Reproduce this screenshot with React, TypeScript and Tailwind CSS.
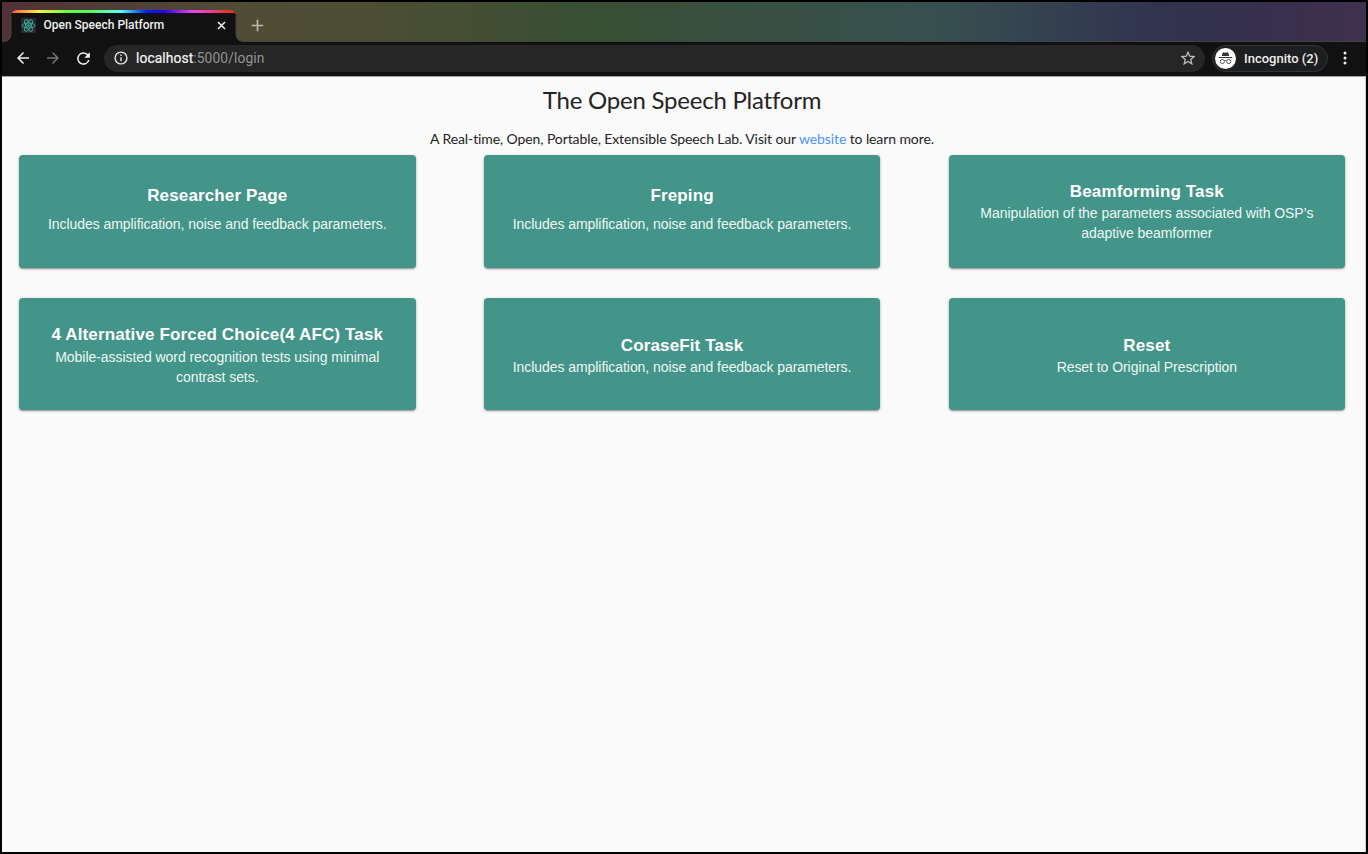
import React from "react";

type Task = { title: string; lines: string[]; pad: string; gap: string };

const tasks: Task[] = [
  { title: "Researcher Page", lines: ["Includes amplification, noise and feedback parameters."], pad: "pt-[31px]", gap: "mt-[8px]" },
  { title: "Freping", lines: ["Includes amplification, noise and feedback parameters."], pad: "pt-[31px]", gap: "mt-[8px]" },
  { title: "Beamforming Task", lines: ["Manipulation of the parameters associated with OSP’s", "adaptive beamformer"], pad: "pt-[27px]", gap: "mt-[1px]" },
  { title: "4 Alternative Forced Choice(4 AFC) Task", lines: ["Mobile-assisted word recognition tests using minimal", "contrast sets."], pad: "pt-[27px]", gap: "mt-[2px]" },
  { title: "CoraseFit Task", lines: ["Includes amplification, noise and feedback parameters."], pad: "pt-[38px]", gap: "mt-[1px]" },
  { title: "Reset", lines: ["Reset to Original Prescription"], pad: "pt-[38px]", gap: "mt-[1px]" },
];

function ReactIcon() {
  return (
    <svg width="15" height="15" viewBox="0 0 15 15" fill="none" stroke="#3fae98" strokeWidth="0.9">
      <rect width="15" height="15" fill="#242b35" stroke="none" />
      <ellipse cx="7.5" cy="7.5" rx="6.4" ry="2.5" />
      <ellipse cx="7.5" cy="7.5" rx="6.4" ry="2.5" transform="rotate(30 7.5 7.5) rotate(30 7.5 7.5)" />
      <ellipse cx="7.5" cy="7.5" rx="6.4" ry="2.5" transform="rotate(120 7.5 7.5)" />
      <circle cx="7.5" cy="7.5" r="1.2" fill="#3fae98" stroke="none" />
    </svg>
  );
}

function TopBar() {
  return (
    <div className="flex h-10 shrink-0 border-b border-[#414345] bg-[linear-gradient(90deg,#513137_0px,#504c36_240px,#4c4e33_380px,#374f33_595px,#385042_750px,#37504f_930px,#323650_1130px,#33314e_1200px,#3a304e_1300px,#40304e_1364px)]">
      <div className="relative -mb-px h-10 w-[243px] shrink-0">
        <svg className="absolute left-0 top-0" width="243" height="40" viewBox="0 0 243 40">
          <path d="M0 39.5h1q8 0 8-8V15q0-6 6-6h213q6 0 6 6v16.500q0 8 8 8h1V40H0z" fill="#111" />
          <path d="M0 39.500h1q8 0 8-8V14M234 14v17.500q0 8 8 8h1" fill="none" stroke="#454545" />
        </svg>
        <div className="absolute left-[9px] top-2 h-[14px] w-[225px] overflow-hidden rounded-t-[6px]">
          <div className="h-[3px] bg-[linear-gradient(90deg,#f54_0%,#fe4_12%,#6f4_25%,#5f5_34%,#5ff_49%,#02f_60%,#20f_68%,#e4e_81%,#f2398c_90%,#e83327_96%)]" />
        </div>
        <div className="relative flex h-full items-center pt-[6px] pl-[19px]">
          <ReactIcon />
          <span className="ml-[7.500px] w-[173px] font-[Roboto] text-[12px] font-medium leading-4 text-[#eee]">Open Speech Platform</span>
          <svg width="9" height="9" viewBox="0 0 9 9" stroke="#eee" strokeWidth="1.500"><path d="M1 1l7 7M8 1L1 8" /></svg>
        </div>
      </div>
      <svg className="ml-[6px] mt-[17px]" width="13" height="13" viewBox="0 0 13 13" stroke="#b9b9ae" strokeWidth="1.700"><path d="M6.500 .8v11.400M.8 6.500h11.400" /></svg>
    </div>
  );
}

function Toolbar() {
  return (
    <div className="flex h-[34px] shrink-0 items-center bg-[#111] pb-[2px]">
      <div className="flex shrink-0 items-center pl-[11.500px]">
        <svg width="18" height="18" viewBox="0 0 24 24" fill="#f1f1f1"><path d="M20 11H7.830l5.590-5.590L12 4l-8 8 8 8 1.410-1.410L7.830 13H20z" /></svg>
        <svg className="ml-[12px]" width="18" height="18" viewBox="0 0 24 24" fill="#737373"><path d="M12 4l-1.410 1.410L16.170 11H4v2h12.170l-5.580 5.590L12 20l8-8z" /></svg>
        <svg className="ml-[12px]" width="19" height="19" viewBox="0 0 24 24" fill="#f1f1f1"><path d="M17.650 6.350A8 8 0 1 0 19.730 14h-2.080A6 6 0 1 1 12 6c1.660 0 3.140.69 4.220 1.780L13 11h7V4z" /></svg>
      </div>
      <div className="ml-[11.500px] flex h-[27px] w-[1101px] shrink-0 items-center rounded-full bg-[#262626] pr-[10px] pl-[10px]">
        <svg width="14" height="14" viewBox="0 0 14 14" fill="none" stroke="#e8e8e8" strokeWidth="1.400"><circle cx="7" cy="7" r="5.900" /><path d="M7 6.200v4M7 3.600V5" /></svg>
        <span className="ml-2 grow font-[Roboto] text-[13.800px] leading-4 tracking-[0.1px] text-[#939393]"><span className="text-[#f4f4f4] [-webkit-text-stroke:0.2px_#f4f4f4]">localhost</span>:5000/login</span>
        <svg width="14" height="14" viewBox="0 0 24 24" fill="none" stroke="#bdbdbd" strokeWidth="2.200"><path d="M12 2l2.900 7 7.600.6-5.800 5 1.800 7.400-6.500-4-6.500 4 1.800-7.400-5.800-5L9.100 9z" /></svg>
      </div>
      <div className="ml-[7px] flex h-[27px] w-[116px] shrink-0 items-center rounded-full border border-[#333439] bg-[#1d1e20] pl-[2px]">
        <svg width="21" height="21" viewBox="0 0 21 21">
          <circle cx="10.500" cy="10.500" r="10.500" fill="#fff" />
          <path d="M6.700 8l1.200-3.700 2.600.5 2.600-.5L14.300 8zM3.800 9h13.400v1.100H3.800z" fill="#333" />
          <g fill="none" stroke="#333" strokeWidth=".8"><circle cx="7.300" cy="13.500" r="2.100" /><circle cx="13.700" cy="13.500" r="2.100" /><path d="M9.400 13q1.100-.7 2.200 0" /></g>
        </svg>
        <span className="ml-[8px] whitespace-nowrap pt-px font-[Roboto] text-[13px] font-medium leading-4 text-[#eee]">Incognito (2)</span>
      </div>
      <svg className="ml-[12.500px]" width="8" height="16" viewBox="0 0 8 16" fill="#eee"><circle cx="4" cy="3" r="1.500" /><circle cx="4" cy="8" r="1.500" /><circle cx="4" cy="13" r="1.500" /></svg>
    </div>
  );
}

export default function App() {
  return (
    <div className="flex h-[854px] w-[1368px] flex-col overflow-hidden border-2 border-black bg-[#fafafa]">
      <TopBar />
      <Toolbar />
      <main className="grow border-t border-r border-t-[#a5a5a5] border-r-[#d0d0d0] text-center">
        <h1 className="mt-[7px] pr-[3px] font-[Lato] text-[24px] leading-8 tracking-[-0.23px] text-[#242424]">The Open Speech Platform</h1>
        <p className="mt-[13px] pr-[3px] font-[Lato] text-[14px] leading-5 tracking-[-0.1px] text-[#242424]">
          A Real-time, Open, Portable, Extensible Speech Lab. Visit our <a className="text-[#4d94f8]">website</a> to learn more.
        </p>
        <div className="mt-[6px] ml-[17px] grid grid-cols-[396.5px_396.5px_396.5px] grid-rows-[113px_112px] gap-x-[68.3px] gap-y-[30px]">
          {tasks.map((t) => (
            <section key={t.title} className={`rounded-[4px] bg-[#429588] font-['Liberation_Sans'] text-white shadow-[0_1px_3px_rgba(0,0,0,0.3),0_1px_1px_rgba(0,0,0,0.2)] ${t.pad}`}>
              <h2 className="text-[17px] font-bold leading-5 tracking-[0.14px]">{t.title}</h2>
              <div className={`text-[14px] leading-5 tracking-[-0.055px] text-[#eef7f5] ${t.gap}`}>
                {t.lines.map((l) => <p key={l}>{l}</p>)}
              </div>
            </section>
          ))}
        </div>
      </main>
    </div>
  );
}
